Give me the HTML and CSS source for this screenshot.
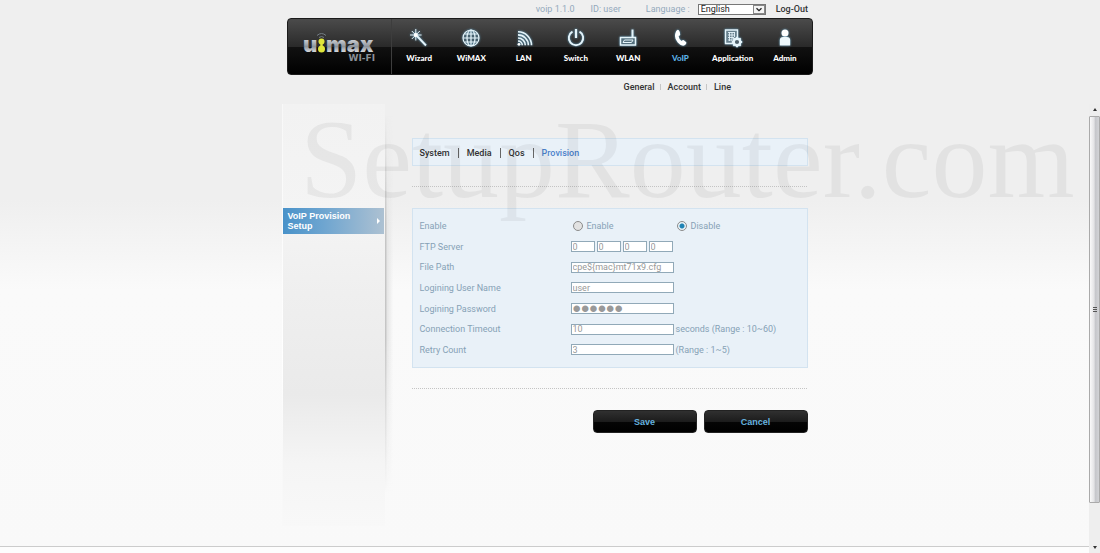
FILE: index.html
```html
<!DOCTYPE html>
<html lang="en">
<head>
<meta charset="utf-8">
<meta name="viewport" content="width=device-width, initial-scale=1">
<title>VoIP Provision Setup</title>
<link rel="stylesheet" href="styles.css">
</head>
<body>
<header class="header">
  <div class="topbar">
    <span class="version">voip 1.1.0</span>
    <span class="user">ID: user</span>
    <label class="lang-label" for="lang">Language :</label>
    <span class="select-box">
      <select id="lang"><option>English</option></select>
      <svg class="caret" width="12" height="9" viewBox="0 0 12 9" aria-hidden="true"><rect x=".5" y=".5" width="11" height="8" fill="#f4f4f4" stroke="#888"/><path d="M3.5 3.2 6 5.7 8.500 3.200" fill="none" stroke="#222" stroke-width="1.300"/></svg>
    </span>
    <a class="logout" href="#">Log-Out</a>
  </div>
  <div class="bar">
    <a class="logo" href="#" aria-label="u:max WI-FI">
      <svg width="74" height="34" viewBox="0 0 74 34">
        <defs><linearGradient id="metal" x1="0" y1="0" x2="0" y2="1"><stop offset=".3" stop-color="#d3d6da"/><stop offset=".6" stop-color="#8d949c"/><stop offset=".78" stop-color="#cfd2d6"/></linearGradient></defs>
        <text class="logo-main" x="0" y="23" fill="url(#metal)">u</text>
        <text class="logo-main" x="23" y="23" fill="url(#metal)">max</text>
        <text class="logo-sub" x="72" y="32" text-anchor="end">WI-FI</text>
        <circle cx="18.500" cy="12.500" r="3" fill="#dfe63c"/><circle cx="18.500" cy="20" r="3.500" fill="#dfe63c"/><path d="M17.300 13h2.400v4h-2.400z" fill="#dfe63c"/>
        <path d="M14 6.500q4.500-4 9 0M16 8.500q2.500-2 5 0" fill="none" stroke="#747d84"/>
      </svg>
    </a>
    <nav class="nav">
      <a href="#"><svg viewBox="0 0 20 20"><path d="m8 8 9 9.500" stroke-width="1.900"/><path d="M6.800 1v11.500M1 7h11.600M2.800 3l8 8M10.800 3l-8 8" stroke-width="1"/><circle cx="6.800" cy="7" r="2" fill="#fff" stroke="none"/></svg>Wizard</a>
      <a href="#"><svg viewBox="0 0 20 20"><circle cx="10" cy="10" r="8"/><ellipse cx="10" cy="10" rx="4" ry="8"/><path d="M10 2v16M2 10h16M3.500 6h13M3.500 14h13"/></svg>WiMAX</a>
      <a href="#"><svg viewBox="0 0 20 20"><path d="M4 3.800A13.500 13.500 0 0 1 17.500 17.300M4 6.900A10.400 10.400 0 0 1 14.400 17.300M4 10A7.300 7.300 0 0 1 11.300 17.300M4 13A4.300 4.300 0 0 1 8.300 17.300" stroke-width="1.600"/><circle cx="5" cy="16.300" r="1.400" fill="#fff" stroke="none"/></svg>LAN</a>
      <a href="#"><svg viewBox="0 0 20 20"><path d="M6.500 3.700a7.200 7.200 0 1 0 7 0" stroke-width="1.900"/><path d="M10 1v9" stroke-width="2.200"/></svg>Switch</a>
      <a href="#"><svg viewBox="0 0 20 20"><path d="M2.500 9.500h15v7.500h-15z" fill="#55707e" stroke-width="1.500"/><path d="M14.500 1.500v8" stroke-width="2"/><path d="M5 14.500 6.500 12H15l-1.500 2.500z" stroke-width="1"/></svg>WLAN</a>
      <a class="current" href="#" aria-current="page"><svg viewBox="0 0 20 20"><path d="M6 3.500Q8-.2 9.800 4l.4 2.600q.1 1-1.600 1.500.3 3 2.900 5 1.500-1.400 2.300-.8l2.200 1.800q1.300 1.500-1.800 3.500-3.200.8-6.500-3Q3.300 9.500 6 3.500z" fill="#fff" stroke="none"/></svg>VoIP</a>
      <a href="#"><svg viewBox="0 0 20 20"><path d="M2.500 2h12v13.500h-12z" fill="#68818e" stroke-width="1.400"/><path d="M5 4.500h7M5 7h7M5 9.500h6M5 12h4M6.500 4v9M9 4v9M11.500 4v5" stroke-width=".9"/><circle cx="14" cy="14" r="3.300" fill="#50616b" stroke-width="2.400"/><path d="M14 8.800v1.500M14 17.700v1.500M8.800 14h1.500M17.700 14h1.500M10.300 10.300l1.100 1.100M16.600 16.600l1.100 1.100M17.700 10.300l-1.100 1.100M11.400 16.600l-1.100 1.100" stroke-width="2"/></svg>Application</a>
      <a href="#"><svg viewBox="0 0 20 20"><circle cx="10" cy="5" r="3.500" fill="#fff" stroke="none"/><path d="M4.800 17.500V12Q5 9 8 9h4q3 0 3.200 3v5.500z" fill="#edf7fb" stroke="none"/></svg>Admin</a>
    </nav>
  </div>
  <nav class="subnav"><a href="#">General</a><a href="#">Account</a><a href="#">Line</a></nav>
</header>

<div class="frame">
  <div class="view">
    <div class="columns">
      <aside class="sidebar">
        <a class="side-item" href="#"><span>VoIP Provision Setup</span><i class="side-arrow"></i></a>
      </aside>
      <main class="content">
        <nav class="tabs"><a href="#">System</a><a href="#">Media</a><a href="#">Qos</a><a class="current" href="#" aria-current="page">Provision</a></nav>
        <hr class="rule">
        <form id="provision" class="panel">
          <div class="row" role="radiogroup" aria-labelledby="enable-title">
            <span class="title" id="enable-title">Enable</span>
            <div class="field radios">
              <label><input type="radio" name="enable">Enable</label>
              <label><input type="radio" name="enable" checked>Disable</label>
            </div>
          </div>
          <div class="row">
            <label class="title" for="ip1">FTP Server</label>
            <div class="field">
              <input class="octet" id="ip1" type="text" value="0">
              <input class="octet" type="text" value="0" aria-label="FTP Server part 2">
              <input class="octet" type="text" value="0" aria-label="FTP Server part 3">
              <input class="octet" type="text" value="0" aria-label="FTP Server part 4">
            </div>
          </div>
          <div class="row"><label class="title" for="path">File Path</label><div class="field"><input id="path" type="text" value="cpe${mac}mt71x9.cfg"></div></div>
          <div class="row"><label class="title" for="name">Logining User Name</label><div class="field"><input id="name" type="text" value="user"></div></div>
          <div class="row"><label class="title" for="pass">Logining Password</label><div class="field"><input id="pass" type="password" value="secret"></div></div>
          <div class="row"><label class="title" for="timeout">Connection Timeout</label><div class="field"><input id="timeout" type="text" value="10"><span>seconds (Range : 10~60)</span></div></div>
          <div class="row"><label class="title" for="retry">Retry Count</label><div class="field"><input id="retry" type="text" value="3"><span>(Range : 1~5)</span></div></div>
        </form>
        <hr class="rule">
        <div class="actions">
          <button type="submit" form="provision">Save</button>
          <button type="reset" form="provision">Cancel</button>
        </div>
      </main>
    </div>
    <div class="view-end"></div>
  </div>
  <div class="scrollbar" aria-hidden="true">
    <i class="arrow up"></i>
    <div class="track"><div class="thumb"><i class="grip"></i></div></div>
    <i class="arrow down"></i>
  </div>
</div>
<div class="watermark" aria-hidden="true">SetupRouter.com</div>
</body>
</html>
```
FILE: styles.css
```css
* { box-sizing: border-box; }

body {
  margin: 0;
  min-height: 100vh;
  display: flex;
  flex-direction: column;
  position: relative;
  background: linear-gradient(#efefef 0, #efefef 200px, #fafafa 290px, #f9f9f9 100%);
  color: #86a1b6;
  font: 9px/12px Roboto, "Liberation Sans", sans-serif;
}

a { color: inherit; text-decoration: none; }

.header {
  width: 100%;
  max-width: 526px;
  margin: 0 auto;
}

/* Top line */
.topbar {
  display: flex;
  justify-content: flex-end;
  align-items: center;
  height: 18px;
  padding-right: 5px;
  color: #93a9bc;
}
.user { margin-left: 16px; }
.lang-label { margin-left: 25px; }
.select-box { position: relative; display: flex; width: 68px; margin: 0 10px 0 8px; }
.select-box select {
  width: 100%;
  height: 11px;
  padding: 0 2px;
  border: 1px solid #777;
  border-radius: 0;
  appearance: none;
  background: #fff;
  color: #222;
  font: 9px/9px Roboto, sans-serif;
}
.caret { position: absolute; right: 1px; top: 1px; pointer-events: none; }
.logout { color: #333; font-weight: 500; }

/* Main menu */
.bar {
  display: flex;
  height: 57px;
  border-radius: 4px;
  border: 1px solid #1b1b1b;
  background: linear-gradient(#4b4b4b 0, #2a2a2a 50%, #111 51%, #000 100%);
}
.logo {
  display: flex;
  justify-content: center;
  align-items: center;
  width: 104px;
  padding-bottom: 2px;
  border-right: 1px solid #3d3d3d;
}
.logo-main { font: 900 22px Inter, sans-serif; }
.logo-sub { font: bold 9px "DejaVu Sans", sans-serif; fill: #8b9197; }
.nav { flex: 1; display: flex; padding: 0 1px; }
.nav a {
  flex: 1 1 0;
  min-width: 0;
  display: flex;
  flex-direction: column;
  align-items: center;
  gap: 4px;
  padding-top: 9px;
  color: #fff;
  font: 900 8px/12px Lato, sans-serif;
}
.nav svg {
  width: 20px;
  height: 20px;
  fill: none;
  stroke: #e5f4fa;
  stroke-width: 1.2;
  filter: drop-shadow(0 0 1px #5f9cbc);
}
.nav .current { color: #5db2e8; }

.subnav {
  display: flex;
  justify-content: flex-end;
  padding: 6px 82px 11px 0;
  color: #333;
  font-weight: 500;
}
.subnav a + a { display: flex; align-items: center; }
.subnav a + a::before { content: ""; width: 1px; height: 6px; margin: 0 7px 0 5px; background: #c5c5c5; }

/* Scrolling frame */
.frame { flex: 1; display: flex; }
.view { flex: 1; min-width: 0; display: flex; flex-direction: column; }
.view-end { height: 7px; margin-top: auto; border-top: 1px solid #ccc; background: #fdfdfd; }
.columns {
  display: flex;
  gap: 27px;
  width: 100%;
  max-width: 526px;
  margin: 0 auto;
}

.sidebar {
  flex: none;
  width: 103px;
  height: 422px;
  padding: 104px 1px 0;
  background: linear-gradient(#f2f2f2 0, #f4f4f4 110px, #efefef 190px, #eaeaea 290px, #f5f5f5 360px, #f8f8f8 100%);
  position: relative;
}
.sidebar::before {
  content: "";
  position: absolute;
  inset: 0 auto 0 0;
  width: 1px;
  background: linear-gradient(#f8f8f8, #fff 60%, #f8f8f8 85%);
}
.sidebar::after {
  content: "";
  position: absolute;
  left: 100%;
  top: 0;
  width: 8px;
  height: 390px;
  background: linear-gradient(90deg, #bdbdbd, #e6e6e6 30%, #f8f8f800);
  mask-image: linear-gradient(transparent 10px, #000 120px, #000 60%, transparent);
}
.side-item {
  display: flex;
  align-items: center;
  justify-content: space-between;
  height: 26px;
  padding: 0 4px 0 5px;
  background: linear-gradient(90deg, #4992c9, #6ea5d0 40%, #adc1d2);
  color: #fff;
  font: bold 9px/10px "Liberation Sans", sans-serif;
}
.side-item span { max-width: 72px; }
.side-arrow { border: 3px solid transparent; border-left-color: #fff; border-right: 0; }

.content { flex: 1; min-width: 0; padding-top: 34px; }
.tabs {
  display: flex;
  align-items: center;
  height: 28px;
  padding: 2px 7px 0;
  border: 1px solid #d3e3f0;
  background: #e9f1f8;
  color: #333;
  font-weight: 500;
}
.tabs a { display: flex; align-items: center; }
.tabs a + a::before { content: ""; width: 1px; height: 10px; margin: 0 8px; background: #666; }
.tabs .current { color: #4c82cb; }

.rule {
  height: 1px;
  margin: 20px 0 21px;
  border: 0;
  background: repeating-linear-gradient(90deg, #c4c4c4 0 1px, transparent 1px 2px);
}

.panel {
  display: grid;
  grid-auto-rows: 1fr;
  min-height: 160px;
  padding: 7px;
  border: 1px solid #d3e3f0;
  background: #e9f1f8;
}
.row { display: flex; align-items: center; }
.title { width: 151px; }
.field { flex: 1; display: flex; align-items: center; gap: 2px; }
.field input { margin: 0; }
input[type="text"], input[type="password"] {
  width: 103px;
  height: 11px;
  padding: 0 1px;
  border: 1px solid #91a9b8;
  border-radius: 0;
  background: #fff;
  color: #999;
  font: 9px/9px Roboto, sans-serif;
}
input[type="password"] { font: 24px/9px "Liberation Sans", sans-serif; }
input.octet { width: 24px; }
.radios { padding-left: 2px; gap: 0; }
.radios label { flex: 0 0 104px; display: flex; align-items: center; gap: 4px; }
input[type="radio"] {
  appearance: none;
  width: 10px;
  height: 10px;
  border: 1px solid #8b8b8b;
  border-radius: 50%;
  background: #e2e2e2;
}
input[type="radio"]:checked { background: radial-gradient(circle, #1f83b5 0 2px, #e8f2f8 3px); }

.actions { display: flex; justify-content: flex-end; gap: 7px; }
.actions button {
  width: 104px;
  height: 23px;
  padding: 0;
  border: 1px solid #222;
  border-radius: 4px;
  background: linear-gradient(#303030, #1c1c1c 50%, #050505 52%, #000);
  color: #65b1df;
  font: bold 9px/12px "Liberation Sans", sans-serif;
}

/* Scrollbar */
.scrollbar {
  display: flex;
  flex-direction: column;
  align-items: center;
  width: 11px;
  background: #eee;
}
.arrow { border: 2px solid transparent; }
.up { border-top: 0; border-bottom: 3px solid #333; margin: 4px 0 5px; }
.down { border-bottom: 0; border-top: 3px solid #333; margin: 5px 0 4px; }
.track { flex: 1; width: 100%; }
.thumb {
  display: flex;
  align-items: center;
  justify-content: center;
  height: 91%;
  border: 1px solid #aaa;
  border-radius: 1px;
  background: linear-gradient(90deg, #fafafa, #e3e3e5 45%, #c6c7cb 60%, #d2d3d6);
}
.grip { width: 4px; height: 5px; background: repeating-linear-gradient(#555 0 1px, transparent 1px 2px); }

.watermark {
  position: absolute;
  left: 300px;
  top: 95px;
  color: rgba(0, 0, 0, .05);
  font: 112px/128px "Liberation Serif", serif;
  white-space: nowrap;
  pointer-events: none;
}
```
